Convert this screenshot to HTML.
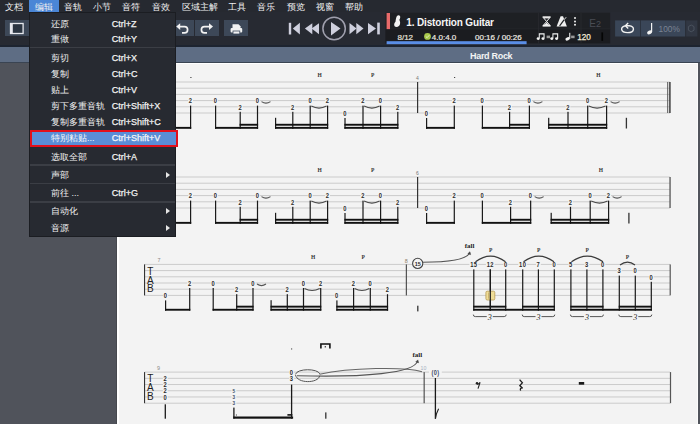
<!DOCTYPE html>
<html><head><meta charset="utf-8">
<style>
*{margin:0;padding:0;box-sizing:border-box}
html,body{width:700px;height:424px;overflow:hidden;background:#272a32;font-family:"Liberation Sans",sans-serif}
.a{position:absolute}
#mb span{position:absolute;top:1px;font-size:9px;line-height:12px;color:#f0f0f0;font-weight:500;white-space:nowrap}
.btn{position:absolute;background:#3d4858}
#menu{position:absolute;left:29px;top:12px;width:147px;height:225px;background:#272a31;border:1px solid #1b1d22}
#menu .r{position:absolute;left:21px;font-size:9px;line-height:12px;color:#f0f0f0;font-weight:500;white-space:nowrap}
#menu .k{position:absolute;left:81.8px;font-size:9px;line-height:12px;color:#f2f2f2;white-space:nowrap;-webkit-text-stroke:0.25px #f2f2f2}
#menu .ar{position:absolute;left:136px;width:0;height:0;border-left:4px solid #e6e6e6;border-top:3.5px solid transparent;border-bottom:3.5px solid transparent}
#menu .sep{position:absolute;left:0;width:145px;height:1.3px;background:#3b3e45}
</style></head><body>
<!-- menu bar -->
<div class="a" style="left:0;top:0;width:700px;height:12px;background:#262930"></div>
<div class="a" style="left:29px;top:0;width:30px;height:13px;background:#4a86d6"></div>
<div id="mb">
<span style="left:5px">文档</span>
<span style="left:35px">编辑</span>
<span style="left:64px">音轨</span>
<span style="left:93px">小节</span>
<span style="left:122px">音符</span>
<span style="left:152px">音效</span>
<span style="left:182px">区域主解</span>
<span style="left:228px">工具</span>
<span style="left:257px">音乐</span>
<span style="left:287px">预览</span>
<span style="left:316px">视窗</span>
<span style="left:345px">帮助</span>
</div>
<!-- toolbar -->
<div class="btn" style="left:4.6px;top:20.3px;width:25px;height:15.8px"></div>
<div class="btn" style="left:170px;top:20px;width:24px;height:16px"></div>
<div class="btn" style="left:195px;top:20px;width:24px;height:16px"></div>
<div class="btn" style="left:224px;top:20px;width:24px;height:16px"></div>
<svg class="a" style="left:0;top:0" width="700" height="63" viewBox="0 0 700 63">
<!-- left button icon -->
<rect x="10.5" y="23.5" width="12.6" height="10" fill="#2b3542" stroke="#e6e8ee" stroke-width="1.3"/>
<rect x="10" y="23" width="2.8" height="11" fill="#e6e8ee"/>
<!-- undo -->
<path d="M179 26.6 H184.5 A3.1 3.1 0 0 1 184.5 32.8 H182" fill="none" stroke="#f2f2f2" stroke-width="1.7"/>
<path d="M176.2 26.6 L180.2 23.3 L180.2 29.9 Z" fill="#f2f2f2"/>
<!-- redo -->
<path d="M210 26.6 H204.5 A3.1 3.1 0 0 0 204.5 32.8 H207" fill="none" stroke="#f2f2f2" stroke-width="1.7"/>
<path d="M213 26.6 L209 23.3 L209 29.9 Z" fill="#f2f2f2"/>
<!-- print -->
<path d="M232.5 24.3 H238.5 L240.5 26.3 V28.5 H232.5 Z" fill="#f2f2f2"/>
<rect x="230.6" y="28" width="11.6" height="4.6" rx="1" fill="#f2f2f2"/>
<rect x="233" y="31" width="6.8" height="3" fill="#f2f2f2" stroke="#3c4a5c" stroke-width="0.8"/>
<!-- transport -->
<g fill="#cfd0de">
<rect x="288.8" y="22.8" width="2.4" height="11.7"/>
<path d="M292.8 28.6 L299.9 22.8 V34.5 Z"/>
<path d="M304.9 28.6 L312.3 23.2 V34.2 Z"/>
<path d="M311.6 28.6 L319 23.2 V34.2 Z"/>
<path d="M331 22 L340.5 28.6 L331 35.4 Z"/>
<path d="M349.5 23 L356.5 28.6 L349.5 34.2 Z"/>
<path d="M356.3 23 L363.5 28.6 L356.3 34.2 Z"/>
<path d="M368 23 L376 28.6 L368 34.2 Z"/>
<rect x="377.2" y="22.6" width="2.6" height="11.8"/>
</g>
<circle cx="334.1" cy="28.5" r="11.2" fill="none" stroke="#a0a0ae" stroke-width="1.5"/>
<!-- track panel -->
<rect x="385.4" y="12.7" width="224.8" height="16.3" fill="#1e2024"/>
<rect x="385.4" y="29" width="224.8" height="14.4" fill="#1b1c20"/><rect x="385.4" y="28.6" width="224.8" height="0.7" fill="#26282d"/>
<rect x="538.3" y="12.7" width="0.8" height="30.7" fill="#2a2c31"/>
<rect x="580.6" y="12.7" width="0.8" height="30.7" fill="#2a2c31"/>
<rect x="386.6" y="13" width="3.4" height="16.1" fill="#e86a6a"/>
<path d="M398.6 15.3 C400.8 15.4 400.6 18 399.3 20 C400.8 22 400.6 26.8 396.5 27 C393.6 27 393.6 23.5 395.5 21.8 C396 19.5 396 15.2 398.6 15.3 Z" fill="#f4f4f4"/>
<text x="406.3" y="26" font-size="10" font-weight="bold" letter-spacing="-0.15" fill="#f6f6f6">1. Distortion Guitar</text>
<text x="397.5" y="39.7" font-size="8" fill="#e8e4dc" stroke="#e8e4dc" stroke-width="0.2">8/12</text>
<circle cx="427.5" cy="36.4" r="3.4" fill="#a8c84a"/>
<path d="M425.8 36.5 L427.1 37.7 L429.3 35.2" fill="none" stroke="#eef4d8" stroke-width="0.8"/>
<text x="431.8" y="39.7" font-size="8" fill="#eeeae2" stroke="#eeeae2" stroke-width="0.2">4.0:4.0</text>
<text x="475" y="39.7" font-size="8" fill="#eeeae2" stroke="#eeeae2" stroke-width="0.2">00:16 / 00:26</text>
<rect x="386.6" y="41.2" width="140" height="3" fill="#5a8ee6"/>
<!-- hourglass -->
<g fill="#f0f0f0">
<rect x="542.6" y="16.3" width="8" height="1.6"/>
<rect x="542.6" y="25" width="8" height="1.6"/>
<path d="M543.6 17.9 H549.6 L546.6 21.5 Z M546.6 21.5 L549.6 25 H543.6 Z" fill="none" stroke="#f0f0f0" stroke-width="1"/>
<path d="M544.5 25 L546.6 22.6 L548.7 25 Z"/>
<path d="M560.6 16.3 H563 L566.9 26.6 H556.6 Z"/>
</g>
<path d="M559.6 25.9 L564.6 19.2" stroke="#1e2024" stroke-width="1.2"/><path d="M564 19.8 L566.2 17.2" stroke="#f0f0f0" stroke-width="0.9"/>
<g fill="#f0f0f0"><circle cx="575" cy="18" r="1"/><circle cx="575" cy="21.4" r="1"/><circle cx="575" cy="24.7" r="1"/></g>
<text x="589.2" y="26.6" font-size="10" fill="#4a4d54">E</text>
<text x="596" y="26.8" font-size="9" fill="#4a4d54">2</text>
<!-- note=note -->
<g fill="#f2f2f2">
<path d="M538.8 33.2 H544.6 V38.6 A1.6 1.3 0 1 1 543.5 37.4 V34.6 H539.8 V38.6 A1.6 1.3 0 1 1 538.8 37.4 Z"/>
<path d="M552.4 33.2 H558.2 V38.6 A1.6 1.3 0 1 1 557.1 37.4 V34.6 H553.4 V38.6 A1.6 1.3 0 1 1 552.4 37.4 Z"/>
<rect x="569.2" y="32.8" width="1.1" height="6" fill="#f2f2f2"/><ellipse cx="567.6" cy="38.9" rx="2.3" ry="1.6" transform="rotate(-25 567.6 38.9)"/>
</g>
<rect x="546.6" y="35.6" width="3.4" height="2.6" fill="#9a9a9a"/>
<rect x="571.1" y="35.6" width="3.5" height="2.6" fill="#9a9a9a"/>
<text x="577.2" y="40" font-size="8.2" fill="#f2ead8" stroke="#f2ead8" stroke-width="0.25">120</text>
<rect x="601.4" y="32.4" width="1.7" height="8.4" fill="#050505"/>
<!-- right buttons -->
<rect x="615.1" y="20.4" width="25" height="16.1" fill="#3a4658"/>
<rect x="640.8" y="20.4" width="44.4" height="16.1" fill="#3a4658"/>
<rect x="640.2" y="20.4" width="0.6" height="16.1" fill="#2c3542"/>
<rect x="686.1" y="20.4" width="11.3" height="16.1" fill="#313743"/>
<path d="M625.3 25.9 C620 26.8 620.2 32.6 627.6 32.6 C635 32.6 635.2 26.2 629.2 25.7 H625.8" fill="none" stroke="#f2f2f2" stroke-width="1.4"/>
<path d="M628.2 23 L625.4 25.7 L628.2 28.4" fill="none" stroke="#f2f2f2" stroke-width="1.4"/>
<rect x="651" y="23" width="1.2" height="9" fill="#f2f2f2"/><ellipse cx="649.6" cy="32.4" rx="2.6" ry="1.9" transform="rotate(-25 649.6 32.4)" fill="#f2f2f2"/>
<text x="658.6" y="32" font-size="8.3" fill="#7a8494">100%</text>
<path d="M691.2 25 L694 26.6 V30.2 L691.2 31.8 L688.4 30.2 V26.6 Z" fill="none" stroke="#4a525e" stroke-width="1"/>
</svg>
<!-- blue bar -->
<div class="a" style="left:0;top:45px;width:700px;height:2px;background:#1d2430"></div>
<div class="a" style="left:0;top:47px;width:700px;height:16px;background:#5e6d84"></div>
<div class="a" style="left:0;top:62px;width:700px;height:1px;background:#3a4452"></div>
<div class="a" style="left:0;top:63px;width:700px;height:361px;background:#50535b"></div>
<div class="a" style="left:116px;top:63px;width:1px;height:361px;background:#46484e"></div>
<div class="a" style="left:117px;top:63px;width:581px;height:361px;background:#f3f3f3;border-left:2px solid #fff;border-top:1px solid #fff;border-right:1px solid #fbfbfb"></div>
<div class="a" style="left:470px;top:49.5px;font-size:9px;letter-spacing:-0.3px;font-weight:bold;color:#f4f4f4;line-height:12px">Hard Rock</div>

<!-- SCORE START -->
<svg class="a" style="left:0;top:0" width="700" height="424" viewBox="0 0 700 424" font-family="Liberation Sans">
<line x1="145.00" y1="82.00" x2="670.00" y2="82.00" stroke="#cbcbcb" stroke-width="1"/>
<line x1="145.00" y1="88.20" x2="670.00" y2="88.20" stroke="#cbcbcb" stroke-width="1"/>
<line x1="145.00" y1="94.40" x2="670.00" y2="94.40" stroke="#cbcbcb" stroke-width="1"/>
<line x1="145.00" y1="100.60" x2="670.00" y2="100.60" stroke="#cbcbcb" stroke-width="1"/>
<line x1="145.00" y1="106.80" x2="670.00" y2="106.80" stroke="#cbcbcb" stroke-width="1"/>
<line x1="145.00" y1="113.00" x2="670.00" y2="113.00" stroke="#cbcbcb" stroke-width="1"/>
<rect x="147.60" y="110.20" width="4.80" height="5.60" fill="#f3f3f3"/>
<text transform="translate(150.00,115.70) scale(0.78,1)" font-size="7.4" fill="#2a2a2a" text-anchor="middle" font-weight="bold" letter-spacing="0.5">0</text>
<rect x="149.40" y="118.00" width="1.20" height="10.80" fill="#1a1a1a"/>
<rect x="188.20" y="97.80" width="4.80" height="5.60" fill="#f3f3f3"/>
<text transform="translate(190.60,103.30) scale(0.78,1)" font-size="7.4" fill="#2a2a2a" text-anchor="middle" font-weight="bold" letter-spacing="0.5">2</text>
<rect x="190.00" y="105.60" width="1.20" height="23.20" fill="#1a1a1a"/>
<rect x="149.40" y="126.90" width="41.80" height="1.90" fill="#111"/>
<rect x="190.30" y="77.00" width="1.20" height="1.00" fill="#444"/>
<rect x="213.20" y="97.80" width="4.80" height="5.60" fill="#f3f3f3"/>
<text transform="translate(215.60,103.30) scale(0.78,1)" font-size="7.4" fill="#2a2a2a" text-anchor="middle" font-weight="bold" letter-spacing="0.5">0</text>
<rect x="215.00" y="105.60" width="1.20" height="23.20" fill="#1a1a1a"/>
<rect x="237.80" y="104.00" width="4.80" height="5.60" fill="#f3f3f3"/>
<text transform="translate(240.20,109.50) scale(0.78,1)" font-size="7.4" fill="#2a2a2a" text-anchor="middle" font-weight="bold" letter-spacing="0.5">2</text>
<rect x="239.60" y="111.80" width="1.20" height="17.00" fill="#1a1a1a"/>
<rect x="255.10" y="97.80" width="4.80" height="5.60" fill="#f3f3f3"/>
<text transform="translate(257.50,103.30) scale(0.78,1)" font-size="7.4" fill="#2a2a2a" text-anchor="middle" font-weight="bold" letter-spacing="0.5">0</text>
<rect x="256.90" y="105.60" width="1.20" height="23.20" fill="#1a1a1a"/>
<rect x="215.00" y="126.90" width="43.10" height="1.90" fill="#111"/>
<rect x="239.60" y="123.80" width="18.50" height="1.90" fill="#111"/>
<path d="M261.5 101.6 Q266 104.6 270.5 101.6" fill="none" stroke="#555" stroke-width="1.1"/>
<rect x="275.00" y="117.80" width="1.20" height="11.00" fill="#1a1a1a"/>
<rect x="290.40" y="104.00" width="4.80" height="5.60" fill="#f3f3f3"/>
<text transform="translate(292.80,109.50) scale(0.78,1)" font-size="7.4" fill="#2a2a2a" text-anchor="middle" font-weight="bold" letter-spacing="0.5">2</text>
<rect x="292.20" y="111.80" width="1.20" height="17.00" fill="#1a1a1a"/>
<rect x="307.80" y="97.80" width="4.80" height="5.60" fill="#f3f3f3"/>
<text transform="translate(310.20,103.30) scale(0.78,1)" font-size="7.4" fill="#2a2a2a" text-anchor="middle" font-weight="bold" letter-spacing="0.5">0</text>
<rect x="309.60" y="105.60" width="1.20" height="23.20" fill="#1a1a1a"/>
<rect x="325.20" y="97.80" width="4.80" height="5.60" fill="#f3f3f3"/>
<text transform="translate(327.60,103.30) scale(0.78,1)" font-size="7.4" fill="#2a2a2a" text-anchor="middle" font-weight="bold" letter-spacing="0.5">2</text>
<rect x="327.00" y="105.60" width="1.20" height="23.20" fill="#1a1a1a"/>
<rect x="275.00" y="126.90" width="53.20" height="1.90" fill="#111"/>
<rect x="275.00" y="123.80" width="53.20" height="1.90" fill="#111"/>
<path d="M311.3 106.1 Q319 110.1 326.6 106.1" fill="none" stroke="#4a4a4a" stroke-width="1.1"/>
<text x="319.60" y="76.50" font-size="5.5" fill="#333" text-anchor="middle" font-weight="bold" font-family="Liberation Serif">H</text>
<rect x="342.60" y="110.20" width="4.80" height="5.60" fill="#f3f3f3"/>
<text transform="translate(345.00,115.70) scale(0.78,1)" font-size="7.4" fill="#2a2a2a" text-anchor="middle" font-weight="bold" letter-spacing="0.5">0</text>
<rect x="344.40" y="118.00" width="1.20" height="10.80" fill="#1a1a1a"/>
<rect x="360.60" y="97.80" width="4.80" height="5.60" fill="#f3f3f3"/>
<text transform="translate(363.00,103.30) scale(0.78,1)" font-size="7.4" fill="#2a2a2a" text-anchor="middle" font-weight="bold" letter-spacing="0.5">2</text>
<rect x="362.40" y="105.60" width="1.20" height="23.20" fill="#1a1a1a"/>
<rect x="378.20" y="97.80" width="4.80" height="5.60" fill="#f3f3f3"/>
<text transform="translate(380.60,103.30) scale(0.78,1)" font-size="7.4" fill="#2a2a2a" text-anchor="middle" font-weight="bold" letter-spacing="0.5">0</text>
<rect x="380.00" y="105.60" width="1.20" height="23.20" fill="#1a1a1a"/>
<rect x="395.40" y="104.00" width="4.80" height="5.60" fill="#f3f3f3"/>
<text transform="translate(397.80,109.50) scale(0.78,1)" font-size="7.4" fill="#2a2a2a" text-anchor="middle" font-weight="bold" letter-spacing="0.5">2</text>
<rect x="397.20" y="111.80" width="1.20" height="17.00" fill="#1a1a1a"/>
<rect x="344.40" y="126.90" width="54.00" height="1.90" fill="#111"/>
<rect x="344.40" y="123.80" width="54.00" height="1.90" fill="#111"/>
<path d="M364.1 106.1 Q372 110.1 379.6 106.1" fill="none" stroke="#4a4a4a" stroke-width="1.1"/>
<text x="372.80" y="76.50" font-size="5.5" fill="#333" text-anchor="middle" font-weight="bold" font-family="Liberation Serif">P</text>
<rect x="417.00" y="82.00" width="1.20" height="31.00" fill="#333"/>
<text x="417.50" y="79.50" font-size="5" fill="#777" text-anchor="middle" font-weight="normal">4</text>
<rect x="424.20" y="110.20" width="4.80" height="5.60" fill="#f3f3f3"/>
<text transform="translate(426.60,115.70) scale(0.78,1)" font-size="7.4" fill="#2a2a2a" text-anchor="middle" font-weight="bold" letter-spacing="0.5">0</text>
<rect x="426.00" y="118.00" width="1.20" height="10.80" fill="#1a1a1a"/>
<rect x="451.90" y="97.80" width="4.80" height="5.60" fill="#f3f3f3"/>
<text transform="translate(454.30,103.30) scale(0.78,1)" font-size="7.4" fill="#2a2a2a" text-anchor="middle" font-weight="bold" letter-spacing="0.5">2</text>
<rect x="453.70" y="105.60" width="1.20" height="23.20" fill="#1a1a1a"/>
<rect x="426.00" y="126.90" width="28.90" height="1.90" fill="#111"/>
<rect x="454.00" y="77.00" width="1.20" height="1.00" fill="#444"/>
<rect x="480.00" y="97.80" width="4.80" height="5.60" fill="#f3f3f3"/>
<text transform="translate(482.40,103.30) scale(0.78,1)" font-size="7.4" fill="#2a2a2a" text-anchor="middle" font-weight="bold" letter-spacing="0.5">0</text>
<rect x="481.80" y="105.60" width="1.20" height="23.20" fill="#1a1a1a"/>
<rect x="507.20" y="104.00" width="4.80" height="5.60" fill="#f3f3f3"/>
<text transform="translate(509.60,109.50) scale(0.78,1)" font-size="7.4" fill="#2a2a2a" text-anchor="middle" font-weight="bold" letter-spacing="0.5">2</text>
<rect x="509.00" y="111.80" width="1.20" height="17.00" fill="#1a1a1a"/>
<rect x="527.00" y="97.80" width="4.80" height="5.60" fill="#f3f3f3"/>
<text transform="translate(529.40,103.30) scale(0.78,1)" font-size="7.4" fill="#2a2a2a" text-anchor="middle" font-weight="bold" letter-spacing="0.5">0</text>
<rect x="528.80" y="105.60" width="1.20" height="23.20" fill="#1a1a1a"/>
<rect x="481.80" y="126.90" width="48.20" height="1.90" fill="#111"/>
<rect x="509.00" y="123.80" width="21.00" height="1.90" fill="#111"/>
<path d="M533.4 101.6 Q537.9 104.6 542.4 101.6" fill="none" stroke="#555" stroke-width="1.1"/>
<rect x="548.10" y="117.80" width="1.20" height="11.00" fill="#1a1a1a"/>
<rect x="565.60" y="104.00" width="4.80" height="5.60" fill="#f3f3f3"/>
<text transform="translate(568.00,109.50) scale(0.78,1)" font-size="7.4" fill="#2a2a2a" text-anchor="middle" font-weight="bold" letter-spacing="0.5">2</text>
<rect x="567.40" y="111.80" width="1.20" height="17.00" fill="#1a1a1a"/>
<rect x="585.30" y="97.80" width="4.80" height="5.60" fill="#f3f3f3"/>
<text transform="translate(587.70,103.30) scale(0.78,1)" font-size="7.4" fill="#2a2a2a" text-anchor="middle" font-weight="bold" letter-spacing="0.5">0</text>
<rect x="587.10" y="105.60" width="1.20" height="23.20" fill="#1a1a1a"/>
<rect x="604.20" y="97.80" width="4.80" height="5.60" fill="#f3f3f3"/>
<text transform="translate(606.60,103.30) scale(0.78,1)" font-size="7.4" fill="#2a2a2a" text-anchor="middle" font-weight="bold" letter-spacing="0.5">2</text>
<rect x="606.00" y="105.60" width="1.20" height="23.20" fill="#1a1a1a"/>
<rect x="548.10" y="126.90" width="59.10" height="1.90" fill="#111"/>
<rect x="548.10" y="123.80" width="59.10" height="1.90" fill="#111"/>
<path d="M588.7 106.1 Q597 110.1 605.6 106.1" fill="none" stroke="#4a4a4a" stroke-width="1.1"/>
<text x="598.50" y="76.50" font-size="5.5" fill="#333" text-anchor="middle" font-weight="bold" font-family="Liberation Serif">H</text>
<path d="M610.6 101.6 Q615.1 104.6 619.6 101.6" fill="none" stroke="#555" stroke-width="1.1"/>
<rect x="625.75" y="117.80" width="1.30" height="10.70" fill="#333"/>
<rect x="667.20" y="82.00" width="1.00" height="31.00" fill="#555"/>
<rect x="669.20" y="82.00" width="1.40" height="31.00" fill="#333"/>
<line x1="145.00" y1="177.00" x2="670.00" y2="177.00" stroke="#cbcbcb" stroke-width="1"/>
<line x1="145.00" y1="183.20" x2="670.00" y2="183.20" stroke="#cbcbcb" stroke-width="1"/>
<line x1="145.00" y1="189.40" x2="670.00" y2="189.40" stroke="#cbcbcb" stroke-width="1"/>
<line x1="145.00" y1="195.60" x2="670.00" y2="195.60" stroke="#cbcbcb" stroke-width="1"/>
<line x1="145.00" y1="201.80" x2="670.00" y2="201.80" stroke="#cbcbcb" stroke-width="1"/>
<line x1="145.00" y1="208.00" x2="670.00" y2="208.00" stroke="#cbcbcb" stroke-width="1"/>
<rect x="147.60" y="205.20" width="4.80" height="5.60" fill="#f3f3f3"/>
<text transform="translate(150.00,210.70) scale(0.78,1)" font-size="7.4" fill="#2a2a2a" text-anchor="middle" font-weight="bold" letter-spacing="0.5">0</text>
<rect x="149.40" y="213.00" width="1.20" height="10.80" fill="#1a1a1a"/>
<rect x="188.20" y="192.80" width="4.80" height="5.60" fill="#f3f3f3"/>
<text transform="translate(190.60,198.30) scale(0.78,1)" font-size="7.4" fill="#2a2a2a" text-anchor="middle" font-weight="bold" letter-spacing="0.5">2</text>
<rect x="190.00" y="200.60" width="1.20" height="23.20" fill="#1a1a1a"/>
<rect x="149.40" y="221.90" width="41.80" height="1.90" fill="#111"/>
<rect x="213.20" y="192.80" width="4.80" height="5.60" fill="#f3f3f3"/>
<text transform="translate(215.60,198.30) scale(0.78,1)" font-size="7.4" fill="#2a2a2a" text-anchor="middle" font-weight="bold" letter-spacing="0.5">0</text>
<rect x="215.00" y="200.60" width="1.20" height="23.20" fill="#1a1a1a"/>
<rect x="237.80" y="199.00" width="4.80" height="5.60" fill="#f3f3f3"/>
<text transform="translate(240.20,204.50) scale(0.78,1)" font-size="7.4" fill="#2a2a2a" text-anchor="middle" font-weight="bold" letter-spacing="0.5">2</text>
<rect x="239.60" y="206.80" width="1.20" height="17.00" fill="#1a1a1a"/>
<rect x="255.10" y="192.80" width="4.80" height="5.60" fill="#f3f3f3"/>
<text transform="translate(257.50,198.30) scale(0.78,1)" font-size="7.4" fill="#2a2a2a" text-anchor="middle" font-weight="bold" letter-spacing="0.5">0</text>
<rect x="256.90" y="200.60" width="1.20" height="23.20" fill="#1a1a1a"/>
<rect x="215.00" y="221.90" width="43.10" height="1.90" fill="#111"/>
<rect x="239.60" y="218.80" width="18.50" height="1.90" fill="#111"/>
<path d="M261.5 196.6 Q266 199.6 270.5 196.6" fill="none" stroke="#555" stroke-width="1.1"/>
<rect x="275.00" y="212.80" width="1.20" height="11.00" fill="#1a1a1a"/>
<rect x="290.40" y="199.00" width="4.80" height="5.60" fill="#f3f3f3"/>
<text transform="translate(292.80,204.50) scale(0.78,1)" font-size="7.4" fill="#2a2a2a" text-anchor="middle" font-weight="bold" letter-spacing="0.5">2</text>
<rect x="292.20" y="206.80" width="1.20" height="17.00" fill="#1a1a1a"/>
<rect x="307.80" y="192.80" width="4.80" height="5.60" fill="#f3f3f3"/>
<text transform="translate(310.20,198.30) scale(0.78,1)" font-size="7.4" fill="#2a2a2a" text-anchor="middle" font-weight="bold" letter-spacing="0.5">0</text>
<rect x="309.60" y="200.60" width="1.20" height="23.20" fill="#1a1a1a"/>
<rect x="325.20" y="192.80" width="4.80" height="5.60" fill="#f3f3f3"/>
<text transform="translate(327.60,198.30) scale(0.78,1)" font-size="7.4" fill="#2a2a2a" text-anchor="middle" font-weight="bold" letter-spacing="0.5">2</text>
<rect x="327.00" y="200.60" width="1.20" height="23.20" fill="#1a1a1a"/>
<rect x="275.00" y="221.90" width="53.20" height="1.90" fill="#111"/>
<rect x="275.00" y="218.80" width="53.20" height="1.90" fill="#111"/>
<path d="M311.3 201.1 Q319 205.1 326.6 201.1" fill="none" stroke="#4a4a4a" stroke-width="1.1"/>
<text x="319.60" y="171.50" font-size="5.5" fill="#333" text-anchor="middle" font-weight="bold" font-family="Liberation Serif">H</text>
<rect x="342.60" y="205.20" width="4.80" height="5.60" fill="#f3f3f3"/>
<text transform="translate(345.00,210.70) scale(0.78,1)" font-size="7.4" fill="#2a2a2a" text-anchor="middle" font-weight="bold" letter-spacing="0.5">0</text>
<rect x="344.40" y="213.00" width="1.20" height="10.80" fill="#1a1a1a"/>
<rect x="360.60" y="192.80" width="4.80" height="5.60" fill="#f3f3f3"/>
<text transform="translate(363.00,198.30) scale(0.78,1)" font-size="7.4" fill="#2a2a2a" text-anchor="middle" font-weight="bold" letter-spacing="0.5">2</text>
<rect x="362.40" y="200.60" width="1.20" height="23.20" fill="#1a1a1a"/>
<rect x="378.20" y="192.80" width="4.80" height="5.60" fill="#f3f3f3"/>
<text transform="translate(380.60,198.30) scale(0.78,1)" font-size="7.4" fill="#2a2a2a" text-anchor="middle" font-weight="bold" letter-spacing="0.5">0</text>
<rect x="380.00" y="200.60" width="1.20" height="23.20" fill="#1a1a1a"/>
<rect x="395.40" y="199.00" width="4.80" height="5.60" fill="#f3f3f3"/>
<text transform="translate(397.80,204.50) scale(0.78,1)" font-size="7.4" fill="#2a2a2a" text-anchor="middle" font-weight="bold" letter-spacing="0.5">2</text>
<rect x="397.20" y="206.80" width="1.20" height="17.00" fill="#1a1a1a"/>
<rect x="344.40" y="221.90" width="54.00" height="1.90" fill="#111"/>
<rect x="344.40" y="218.80" width="54.00" height="1.90" fill="#111"/>
<path d="M364.1 201.1 Q372 205.1 379.6 201.1" fill="none" stroke="#4a4a4a" stroke-width="1.1"/>
<text x="372.80" y="171.50" font-size="5.5" fill="#333" text-anchor="middle" font-weight="bold" font-family="Liberation Serif">P</text>
<rect x="417.00" y="177.00" width="1.20" height="31.00" fill="#333"/>
<text x="417.50" y="174.50" font-size="5" fill="#777" text-anchor="middle" font-weight="normal">6</text>
<rect x="424.20" y="205.20" width="4.80" height="5.60" fill="#f3f3f3"/>
<text transform="translate(426.60,210.70) scale(0.78,1)" font-size="7.4" fill="#2a2a2a" text-anchor="middle" font-weight="bold" letter-spacing="0.5">0</text>
<rect x="426.00" y="213.00" width="1.20" height="10.80" fill="#1a1a1a"/>
<rect x="451.90" y="192.80" width="4.80" height="5.60" fill="#f3f3f3"/>
<text transform="translate(454.30,198.30) scale(0.78,1)" font-size="7.4" fill="#2a2a2a" text-anchor="middle" font-weight="bold" letter-spacing="0.5">2</text>
<rect x="453.70" y="200.60" width="1.20" height="23.20" fill="#1a1a1a"/>
<rect x="426.00" y="221.90" width="28.90" height="1.90" fill="#111"/>
<rect x="480.00" y="192.80" width="4.80" height="5.60" fill="#f3f3f3"/>
<text transform="translate(482.40,198.30) scale(0.78,1)" font-size="7.4" fill="#2a2a2a" text-anchor="middle" font-weight="bold" letter-spacing="0.5">0</text>
<rect x="481.80" y="200.60" width="1.20" height="23.20" fill="#1a1a1a"/>
<rect x="508.20" y="199.00" width="4.80" height="5.60" fill="#f3f3f3"/>
<text transform="translate(510.60,204.50) scale(0.78,1)" font-size="7.4" fill="#2a2a2a" text-anchor="middle" font-weight="bold" letter-spacing="0.5">2</text>
<rect x="510.00" y="206.80" width="1.20" height="17.00" fill="#1a1a1a"/>
<rect x="528.25" y="192.80" width="4.80" height="5.60" fill="#f3f3f3"/>
<text transform="translate(530.65,198.30) scale(0.78,1)" font-size="7.4" fill="#2a2a2a" text-anchor="middle" font-weight="bold" letter-spacing="0.5">0</text>
<rect x="530.05" y="200.60" width="1.20" height="23.20" fill="#1a1a1a"/>
<rect x="481.80" y="221.90" width="49.45" height="1.90" fill="#111"/>
<rect x="510.00" y="218.80" width="21.25" height="1.90" fill="#111"/>
<path d="M534.65 196.6 Q539.15 199.6 543.65 196.6" fill="none" stroke="#555" stroke-width="1.1"/>
<rect x="550.60" y="212.80" width="1.20" height="11.00" fill="#1a1a1a"/>
<rect x="568.10" y="199.00" width="4.80" height="5.60" fill="#f3f3f3"/>
<text transform="translate(570.50,204.50) scale(0.78,1)" font-size="7.4" fill="#2a2a2a" text-anchor="middle" font-weight="bold" letter-spacing="0.5">2</text>
<rect x="569.90" y="206.80" width="1.20" height="17.00" fill="#1a1a1a"/>
<rect x="587.80" y="192.80" width="4.80" height="5.60" fill="#f3f3f3"/>
<text transform="translate(590.20,198.30) scale(0.78,1)" font-size="7.4" fill="#2a2a2a" text-anchor="middle" font-weight="bold" letter-spacing="0.5">0</text>
<rect x="589.60" y="200.60" width="1.20" height="23.20" fill="#1a1a1a"/>
<rect x="606.20" y="192.80" width="4.80" height="5.60" fill="#f3f3f3"/>
<text transform="translate(608.60,198.30) scale(0.78,1)" font-size="7.4" fill="#2a2a2a" text-anchor="middle" font-weight="bold" letter-spacing="0.5">2</text>
<rect x="608.00" y="200.60" width="1.20" height="23.20" fill="#1a1a1a"/>
<rect x="550.60" y="221.90" width="58.60" height="1.90" fill="#111"/>
<rect x="550.60" y="218.80" width="58.60" height="1.90" fill="#111"/>
<path d="M591.2 201.1 Q599.5 205.1 607.6 201.1" fill="none" stroke="#4a4a4a" stroke-width="1.1"/>
<text x="601.00" y="171.50" font-size="5.5" fill="#333" text-anchor="middle" font-weight="bold" font-family="Liberation Serif">H</text>
<path d="M612.6 196.6 Q617.1 199.6 621.6 196.6" fill="none" stroke="#555" stroke-width="1.1"/>
<rect x="628.25" y="212.80" width="1.30" height="10.70" fill="#333"/>
<rect x="669.40" y="177.00" width="1.30" height="31.00" fill="#555"/>
<line x1="144.50" y1="264.40" x2="670.00" y2="264.40" stroke="#cbcbcb" stroke-width="1"/>
<line x1="144.50" y1="270.60" x2="670.00" y2="270.60" stroke="#cbcbcb" stroke-width="1"/>
<line x1="144.50" y1="276.80" x2="670.00" y2="276.80" stroke="#cbcbcb" stroke-width="1"/>
<line x1="144.50" y1="283.00" x2="670.00" y2="283.00" stroke="#cbcbcb" stroke-width="1"/>
<line x1="144.50" y1="289.20" x2="670.00" y2="289.20" stroke="#cbcbcb" stroke-width="1"/>
<line x1="144.50" y1="295.40" x2="670.00" y2="295.40" stroke="#cbcbcb" stroke-width="1"/>
<rect x="144.00" y="264.40" width="1.10" height="31.00" fill="#333"/>
<text x="147.20" y="274.60" font-size="10" fill="#222" text-anchor="start" font-weight="normal">T</text>
<text x="147.00" y="283.70" font-size="10" fill="#222" text-anchor="start" font-weight="normal">A</text>
<text x="147.00" y="292.00" font-size="10" fill="#222" text-anchor="start" font-weight="normal">B</text>
<text x="159.00" y="262.20" font-size="5.4" fill="#888" text-anchor="middle" font-weight="normal">7</text>
<rect x="163.20" y="292.60" width="4.80" height="5.60" fill="#f3f3f3"/>
<text transform="translate(165.60,298.10) scale(0.78,1)" font-size="7.4" fill="#2a2a2a" text-anchor="middle" font-weight="bold" letter-spacing="0.5">0</text>
<rect x="165.00" y="300.40" width="1.20" height="10.30" fill="#1a1a1a"/>
<rect x="187.30" y="280.20" width="4.80" height="5.60" fill="#f3f3f3"/>
<text transform="translate(189.70,285.70) scale(0.78,1)" font-size="7.4" fill="#2a2a2a" text-anchor="middle" font-weight="bold" letter-spacing="0.5">2</text>
<rect x="189.10" y="288.00" width="1.20" height="22.70" fill="#1a1a1a"/>
<rect x="165.00" y="308.80" width="25.30" height="1.90" fill="#111"/>
<rect x="210.80" y="280.20" width="4.80" height="5.60" fill="#f3f3f3"/>
<text transform="translate(213.20,285.70) scale(0.78,1)" font-size="7.4" fill="#2a2a2a" text-anchor="middle" font-weight="bold" letter-spacing="0.5">0</text>
<rect x="212.60" y="288.00" width="1.20" height="22.70" fill="#1a1a1a"/>
<rect x="234.30" y="286.40" width="4.80" height="5.60" fill="#f3f3f3"/>
<text transform="translate(236.70,291.90) scale(0.78,1)" font-size="7.4" fill="#2a2a2a" text-anchor="middle" font-weight="bold" letter-spacing="0.5">2</text>
<rect x="236.10" y="294.20" width="1.20" height="16.50" fill="#1a1a1a"/>
<rect x="250.60" y="280.20" width="4.80" height="5.60" fill="#f3f3f3"/>
<text transform="translate(253.00,285.70) scale(0.78,1)" font-size="7.4" fill="#2a2a2a" text-anchor="middle" font-weight="bold" letter-spacing="0.5">0</text>
<rect x="252.40" y="288.00" width="1.20" height="22.70" fill="#1a1a1a"/>
<rect x="212.60" y="308.80" width="41.00" height="1.90" fill="#111"/>
<rect x="236.10" y="305.70" width="17.50" height="1.90" fill="#111"/>
<path d="M257.0 284.0 Q261.5 287.2 266.0 284.0" fill="none" stroke="#555" stroke-width="1.1"/>
<rect x="270.50" y="300.20" width="1.20" height="10.50" fill="#1a1a1a"/>
<rect x="284.90" y="286.40" width="4.80" height="5.60" fill="#f3f3f3"/>
<text transform="translate(287.30,291.90) scale(0.78,1)" font-size="7.4" fill="#2a2a2a" text-anchor="middle" font-weight="bold" letter-spacing="0.5">2</text>
<rect x="286.70" y="294.20" width="1.20" height="16.50" fill="#1a1a1a"/>
<rect x="301.10" y="280.20" width="4.80" height="5.60" fill="#f3f3f3"/>
<text transform="translate(303.50,285.70) scale(0.78,1)" font-size="7.4" fill="#2a2a2a" text-anchor="middle" font-weight="bold" letter-spacing="0.5">0</text>
<rect x="302.90" y="288.00" width="1.20" height="22.70" fill="#1a1a1a"/>
<rect x="318.30" y="280.20" width="4.80" height="5.60" fill="#f3f3f3"/>
<text transform="translate(320.70,285.70) scale(0.78,1)" font-size="7.4" fill="#2a2a2a" text-anchor="middle" font-weight="bold" letter-spacing="0.5">2</text>
<rect x="320.10" y="288.00" width="1.20" height="22.70" fill="#1a1a1a"/>
<rect x="270.50" y="308.80" width="50.80" height="1.90" fill="#111"/>
<rect x="270.50" y="305.70" width="50.80" height="1.90" fill="#111"/>
<path d="M304.5 288.5 Q312.1 292.5 319.7 288.5" fill="none" stroke="#4a4a4a" stroke-width="1.1"/>
<text x="313.20" y="258.90" font-size="5.5" fill="#333" text-anchor="middle" font-weight="bold" font-family="Liberation Serif">H</text>
<rect x="334.50" y="292.60" width="4.80" height="5.60" fill="#f3f3f3"/>
<text transform="translate(336.90,298.10) scale(0.78,1)" font-size="7.4" fill="#2a2a2a" text-anchor="middle" font-weight="bold" letter-spacing="0.5">0</text>
<rect x="336.30" y="300.40" width="1.20" height="10.30" fill="#1a1a1a"/>
<rect x="351.20" y="280.20" width="4.80" height="5.60" fill="#f3f3f3"/>
<text transform="translate(353.60,285.70) scale(0.78,1)" font-size="7.4" fill="#2a2a2a" text-anchor="middle" font-weight="bold" letter-spacing="0.5">2</text>
<rect x="353.00" y="288.00" width="1.20" height="22.70" fill="#1a1a1a"/>
<rect x="367.90" y="280.20" width="4.80" height="5.60" fill="#f3f3f3"/>
<text transform="translate(370.30,285.70) scale(0.78,1)" font-size="7.4" fill="#2a2a2a" text-anchor="middle" font-weight="bold" letter-spacing="0.5">0</text>
<rect x="369.70" y="288.00" width="1.20" height="22.70" fill="#1a1a1a"/>
<rect x="385.10" y="286.40" width="4.80" height="5.60" fill="#f3f3f3"/>
<text transform="translate(387.50,291.90) scale(0.78,1)" font-size="7.4" fill="#2a2a2a" text-anchor="middle" font-weight="bold" letter-spacing="0.5">2</text>
<rect x="386.90" y="294.20" width="1.20" height="16.50" fill="#1a1a1a"/>
<rect x="336.30" y="308.80" width="51.80" height="1.90" fill="#111"/>
<rect x="336.30" y="305.70" width="51.80" height="1.90" fill="#111"/>
<path d="M354.6 288.5 Q361.95000000000005 292.5 369.3 288.5" fill="none" stroke="#4a4a4a" stroke-width="1.1"/>
<text x="363.30" y="258.90" font-size="5.5" fill="#333" text-anchor="middle" font-weight="bold" font-family="Liberation Serif">P</text>
<rect x="405.80" y="264.40" width="1.10" height="31.00" fill="#444"/>
<text x="406.30" y="262.80" font-size="5.4" fill="#8c7c66" text-anchor="middle" font-weight="normal">8</text>
<circle cx="417.7" cy="263.4" r="5.1" fill="#f3f3f3" stroke="#444" stroke-width="1.1"/>
<text x="417.70" y="265.60" font-size="5.4" fill="#2a2a2a" text-anchor="middle" font-weight="bold">15</text>
<path d="M422.8 262.2 C440 262.2 466 261.4 469.6 252.89999999999998" fill="none" stroke="#555" stroke-width="1.1"/>
<path d="M467.8 253.79999999999998 L469.9 251.79999999999998 L470.6 254.59999999999997 Z" fill="#444" stroke="#444" stroke-width="0.6"/>
<text x="469.60" y="248.40" font-size="7" fill="#222" text-anchor="middle" font-weight="bold" font-family="Liberation Serif">fall</text>
<rect x="417.15" y="305.70" width="1.30" height="5.70" fill="#333"/>
<rect x="469.40" y="261.60" width="8.80" height="5.60" fill="#f3f3f3"/>
<text transform="translate(473.80,267.10) scale(0.78,1)" font-size="7.4" fill="#2a2a2a" text-anchor="middle" font-weight="bold" letter-spacing="0.5">15</text>
<rect x="473.20" y="269.40" width="1.20" height="41.30" fill="#1a1a1a"/>
<rect x="485.90" y="261.60" width="8.80" height="5.60" fill="#f3f3f3"/>
<text transform="translate(490.30,267.10) scale(0.78,1)" font-size="7.4" fill="#2a2a2a" text-anchor="middle" font-weight="bold" letter-spacing="0.5">12</text>
<rect x="489.70" y="269.40" width="1.20" height="41.30" fill="#1a1a1a"/>
<rect x="503.30" y="261.60" width="4.80" height="5.60" fill="#f3f3f3"/>
<text transform="translate(505.70,267.10) scale(0.78,1)" font-size="7.4" fill="#2a2a2a" text-anchor="middle" font-weight="bold" letter-spacing="0.5">0</text>
<rect x="505.10" y="269.40" width="1.20" height="41.30" fill="#1a1a1a"/>
<rect x="473.20" y="305.70" width="33.10" height="1.90" fill="#111"/>
<path d="M473.3 314.59999999999997 Q473.3 316.59999999999997 475.3 316.59999999999997 H486.75 M492.75 316.59999999999997 H504.2 Q506.2 316.59999999999997 506.2 314.59999999999997" fill="none" stroke="#444" stroke-width="0.9"/>
<text x="489.75" y="320.00" font-size="8" fill="#222" text-anchor="middle" font-weight="normal" font-family="Liberation Serif" font-style="italic">3</text>
<rect x="518.30" y="261.60" width="8.80" height="5.60" fill="#f3f3f3"/>
<text transform="translate(522.70,267.10) scale(0.78,1)" font-size="7.4" fill="#2a2a2a" text-anchor="middle" font-weight="bold" letter-spacing="0.5">10</text>
<rect x="522.10" y="269.40" width="1.20" height="41.30" fill="#1a1a1a"/>
<rect x="536.00" y="261.60" width="4.80" height="5.60" fill="#f3f3f3"/>
<text transform="translate(538.40,267.10) scale(0.78,1)" font-size="7.4" fill="#2a2a2a" text-anchor="middle" font-weight="bold" letter-spacing="0.5">7</text>
<rect x="537.80" y="269.40" width="1.20" height="41.30" fill="#1a1a1a"/>
<rect x="551.90" y="261.60" width="4.80" height="5.60" fill="#f3f3f3"/>
<text transform="translate(554.30,267.10) scale(0.78,1)" font-size="7.4" fill="#2a2a2a" text-anchor="middle" font-weight="bold" letter-spacing="0.5">0</text>
<rect x="553.70" y="269.40" width="1.20" height="41.30" fill="#1a1a1a"/>
<rect x="522.10" y="305.70" width="32.80" height="1.90" fill="#111"/>
<path d="M522.2 314.59999999999997 Q522.2 316.59999999999997 524.2 316.59999999999997 H535.5 M541.5 316.59999999999997 H552.8 Q554.8 316.59999999999997 554.8 314.59999999999997" fill="none" stroke="#444" stroke-width="0.9"/>
<text x="538.50" y="320.00" font-size="8" fill="#222" text-anchor="middle" font-weight="normal" font-family="Liberation Serif" font-style="italic">3</text>
<rect x="568.50" y="261.60" width="4.80" height="5.60" fill="#f3f3f3"/>
<text transform="translate(570.90,267.10) scale(0.78,1)" font-size="7.4" fill="#2a2a2a" text-anchor="middle" font-weight="bold" letter-spacing="0.5">5</text>
<rect x="570.30" y="269.40" width="1.20" height="41.30" fill="#1a1a1a"/>
<rect x="584.50" y="261.60" width="4.80" height="5.60" fill="#f3f3f3"/>
<text transform="translate(586.90,267.10) scale(0.78,1)" font-size="7.4" fill="#2a2a2a" text-anchor="middle" font-weight="bold" letter-spacing="0.5">3</text>
<rect x="586.30" y="269.40" width="1.20" height="41.30" fill="#1a1a1a"/>
<rect x="600.50" y="261.60" width="4.80" height="5.60" fill="#f3f3f3"/>
<text transform="translate(602.90,267.10) scale(0.78,1)" font-size="7.4" fill="#2a2a2a" text-anchor="middle" font-weight="bold" letter-spacing="0.5">0</text>
<rect x="602.30" y="269.40" width="1.20" height="41.30" fill="#1a1a1a"/>
<rect x="570.30" y="305.70" width="33.20" height="1.90" fill="#111"/>
<path d="M570.4 314.59999999999997 Q570.4 316.59999999999997 572.4 316.59999999999997 H583.9 M589.9 316.59999999999997 H601.4 Q603.4 316.59999999999997 603.4 314.59999999999997" fill="none" stroke="#444" stroke-width="0.9"/>
<text x="586.90" y="320.00" font-size="8" fill="#222" text-anchor="middle" font-weight="normal" font-family="Liberation Serif" font-style="italic">3</text>
<rect x="616.90" y="267.80" width="4.80" height="5.60" fill="#f3f3f3"/>
<text transform="translate(619.30,273.30) scale(0.78,1)" font-size="7.4" fill="#2a2a2a" text-anchor="middle" font-weight="bold" letter-spacing="0.5">3</text>
<rect x="618.70" y="275.60" width="1.20" height="35.10" fill="#1a1a1a"/>
<rect x="632.90" y="267.80" width="4.80" height="5.60" fill="#f3f3f3"/>
<text transform="translate(635.30,273.30) scale(0.78,1)" font-size="7.4" fill="#2a2a2a" text-anchor="middle" font-weight="bold" letter-spacing="0.5">0</text>
<rect x="634.70" y="275.60" width="1.20" height="35.10" fill="#1a1a1a"/>
<rect x="648.90" y="274.00" width="4.80" height="5.60" fill="#f3f3f3"/>
<text transform="translate(651.30,279.50) scale(0.78,1)" font-size="7.4" fill="#2a2a2a" text-anchor="middle" font-weight="bold" letter-spacing="0.5">0</text>
<rect x="650.70" y="281.80" width="1.20" height="28.90" fill="#1a1a1a"/>
<rect x="618.70" y="305.70" width="33.20" height="1.90" fill="#111"/>
<path d="M618.8 314.59999999999997 Q618.8 316.59999999999997 620.8 316.59999999999997 H632.3 M638.3 316.59999999999997 H649.8 Q651.8 316.59999999999997 651.8 314.59999999999997" fill="none" stroke="#444" stroke-width="0.9"/>
<text x="635.30" y="320.00" font-size="8" fill="#222" text-anchor="middle" font-weight="normal" font-family="Liberation Serif" font-style="italic">3</text>
<rect x="473.20" y="308.80" width="81.70" height="1.90" fill="#111"/>
<rect x="570.30" y="308.80" width="81.60" height="1.90" fill="#111"/>
<path d="M475.5 261.79999999999995 Q490.5 250.39999999999998 505.5 261.79999999999995" fill="none" stroke="#3a3a3a" stroke-width="1.2"/>
<text x="490.70" y="252.40" font-size="5.5" fill="#333" text-anchor="middle" font-weight="bold" font-family="Liberation Serif">P</text>
<path d="M523.5 261.79999999999995 Q538.75 250.39999999999998 554 261.79999999999995" fill="none" stroke="#3a3a3a" stroke-width="1.2"/>
<text x="538.80" y="252.40" font-size="5.5" fill="#333" text-anchor="middle" font-weight="bold" font-family="Liberation Serif">P</text>
<path d="M571.5 261.79999999999995 Q587.25 250.39999999999998 603 261.79999999999995" fill="none" stroke="#3a3a3a" stroke-width="1.2"/>
<text x="587.30" y="252.40" font-size="5.5" fill="#333" text-anchor="middle" font-weight="bold" font-family="Liberation Serif">P</text>
<path d="M620 265.0 Q627.5 259.4 635 265.0" fill="none" stroke="#3a3a3a" stroke-width="1.2"/>
<text x="627.50" y="258.60" font-size="5.5" fill="#333" text-anchor="middle" font-weight="bold" font-family="Liberation Serif">P</text>
<rect x="485.9" y="291.2" width="8.9" height="8.8" rx="1.3" fill="#efdd98" stroke="#b89a50" stroke-width="0.8"/>
<rect x="489.70" y="269.40" width="1.20" height="41.30" fill="#1a1a1a"/>
<rect x="488.00" y="292.50" width="0.60" height="6.20" fill="#b89a50"/>
<rect x="669.60" y="264.40" width="1.20" height="31.00" fill="#555"/>
<line x1="144.50" y1="372.10" x2="670.00" y2="372.10" stroke="#cbcbcb" stroke-width="1"/>
<line x1="144.50" y1="378.32" x2="670.00" y2="378.32" stroke="#cbcbcb" stroke-width="1"/>
<line x1="144.50" y1="384.54" x2="670.00" y2="384.54" stroke="#cbcbcb" stroke-width="1"/>
<line x1="144.50" y1="390.76" x2="670.00" y2="390.76" stroke="#cbcbcb" stroke-width="1"/>
<line x1="144.50" y1="396.98" x2="670.00" y2="396.98" stroke="#cbcbcb" stroke-width="1"/>
<line x1="144.50" y1="403.20" x2="670.00" y2="403.20" stroke="#cbcbcb" stroke-width="1"/>
<rect x="144.00" y="372.10" width="1.10" height="31.10" fill="#333"/>
<text x="147.20" y="382.30" font-size="10" fill="#222" text-anchor="start" font-weight="normal">T</text>
<text x="147.00" y="391.40" font-size="10" fill="#222" text-anchor="start" font-weight="normal">A</text>
<text x="147.00" y="399.70" font-size="10" fill="#222" text-anchor="start" font-weight="normal">B</text>
<text x="158.60" y="369.70" font-size="5.4" fill="#888" text-anchor="middle" font-weight="normal">9</text>
<rect x="162.90" y="375.50" width="4.80" height="5.60" fill="#f3f3f3"/>
<text transform="translate(165.30,381.00) scale(0.78,1)" font-size="7.4" fill="#2a2a2a" text-anchor="middle" font-weight="bold" letter-spacing="0.5">2</text>
<rect x="162.90" y="381.70" width="4.80" height="5.60" fill="#f3f3f3"/>
<text transform="translate(165.30,387.20) scale(0.78,1)" font-size="7.4" fill="#2a2a2a" text-anchor="middle" font-weight="bold" letter-spacing="0.5">2</text>
<rect x="162.90" y="387.90" width="4.80" height="5.60" fill="#f3f3f3"/>
<text transform="translate(165.30,393.40) scale(0.78,1)" font-size="7.4" fill="#2a2a2a" text-anchor="middle" font-weight="bold" letter-spacing="0.5">2</text>
<rect x="162.90" y="394.10" width="4.80" height="5.60" fill="#f3f3f3"/>
<text transform="translate(165.30,399.60) scale(0.78,1)" font-size="7.4" fill="#2a2a2a" text-anchor="middle" font-weight="bold" letter-spacing="0.5">0</text>
<rect x="164.65" y="404.30" width="1.30" height="14.40" fill="#1a1a1a"/>
<rect x="231.50" y="387.50" width="4.80" height="5.60" fill="#f3f3f3"/>
<text transform="translate(233.90,393.00) scale(0.78,1)" font-size="6.0" fill="#3a4e66" text-anchor="middle" font-weight="bold" letter-spacing="0.5">5</text>
<rect x="231.50" y="393.70" width="4.80" height="5.60" fill="#f3f3f3"/>
<text transform="translate(233.90,399.20) scale(0.78,1)" font-size="6.0" fill="#3a4e66" text-anchor="middle" font-weight="bold" letter-spacing="0.5">3</text>
<rect x="231.50" y="399.90" width="4.80" height="5.60" fill="#f3f3f3"/>
<text transform="translate(233.90,405.40) scale(0.78,1)" font-size="6.0" fill="#3a4e66" text-anchor="middle" font-weight="bold" letter-spacing="0.5">3</text>
<rect x="233.25" y="407.60" width="1.30" height="11.10" fill="#1a1a1a"/>
<rect x="233.30" y="416.50" width="59.80" height="2.20" fill="#111"/>
<rect x="287.40" y="414.10" width="5.00" height="1.60" fill="#111"/>
<rect x="235.90" y="414.50" width="1.10" height="1.00" fill="#444"/>
<rect x="291.00" y="348.40" width="1.20" height="1.10" fill="#555"/>
<rect x="289.20" y="369.30" width="4.80" height="5.60" fill="#f3f3f3"/>
<text transform="translate(291.60,374.80) scale(0.78,1)" font-size="7.4" fill="#2a2a2a" text-anchor="middle" font-weight="bold" letter-spacing="0.5">0</text>
<rect x="289.20" y="375.50" width="4.80" height="5.60" fill="#f3f3f3"/>
<text transform="translate(291.60,381.00) scale(0.78,1)" font-size="7.4" fill="#2a2a2a" text-anchor="middle" font-weight="bold" letter-spacing="0.5">3</text>
<rect x="290.95" y="384.60" width="1.30" height="34.10" fill="#1a1a1a"/>
<path d="M295.5 374.3 C297 368.3 318 368.3 319.8 373.90000000000003" fill="none" stroke="#555" stroke-width="1.0"/>
<path d="M295.5 374.90000000000003 C297 383.70000000000005 318 383.70000000000005 319.8 375.70000000000005" fill="none" stroke="#555" stroke-width="1.0"/>
<path d="M319.5 374.3 C350 367.5 405 366.70000000000005 422 371.70000000000005" fill="none" stroke="#666" stroke-width="1.1"/>
<path d="M297 375.70000000000005 C365 377.6 414 373.1 417.6 361.1" fill="none" stroke="#555" stroke-width="1.1"/>
<path d="M415.8 361.90000000000003 L417.8 359.90000000000003 L418.6 362.70000000000005 Z" fill="#444" stroke="#444" stroke-width="0.6"/>
<text x="417.40" y="356.50" font-size="7" fill="#222" text-anchor="middle" font-weight="bold" font-family="Liberation Serif">fall</text>
<path d="M320.9 348.6 V344 H329.9 V348.6" fill="none" stroke="#111" stroke-width="1.6"/>
<rect x="324.70" y="346.20" width="1.20" height="1.20" fill="#111"/>
<rect x="325.15" y="412.40" width="1.30" height="6.30" fill="#333"/>
<rect x="423.60" y="372.10" width="1.10" height="31.10" fill="#444"/>
<text x="423.50" y="369.90" font-size="5.2" fill="#a6b0c0" text-anchor="middle" font-weight="normal">10</text>
<rect x="429.00" y="369.60" width="12.80" height="5.60" fill="#f3f3f3"/>
<text transform="translate(435.40,375.10) scale(0.78,1)" font-size="7.2" fill="#3a4a66" text-anchor="middle" font-weight="bold" letter-spacing="0.5">(0)</text>
<rect x="434.75" y="378.00" width="1.30" height="40.70" fill="#1a1a1a"/>
<path d="M435.4 418.70000000000005 Q436 413.70000000000005 438.6 408.70000000000005" fill="none" stroke="#222" stroke-width="1.1"/>
<path d="M477 384.2 Q478.9 384.4 480.1 382.3 L478.0 388.7" fill="none" stroke="#222" stroke-width="1.1"/>
<circle cx="477.0" cy="383.2" r="1.25" fill="#222"/>
<path d="M519.6 379.6 L522.4 382.8 L519.8 385.6 L522.6 388.2 Q519.5 387.4 520.6 390.6" fill="none" stroke="#222" stroke-width="1.3"/>
<rect x="578.80" y="382.00" width="5.40" height="2.70" fill="#1a1a1a"/>
<rect x="669.90" y="372.10" width="1.20" height="31.10" fill="#555"/>
</svg>
<!-- SCORE END -->
<!-- dropdown -->
<div id="menu">
<div class="sep" style="top:34.1px"></div>
<div class="sep" style="top:151.3px"></div>
<div class="sep" style="top:170.1px"></div>
<div class="sep" style="top:188.3px"></div>
<div class="r" style="top:4.7px">还原</div>
<div class="k" style="top:4.7px">Ctrl+Z</div>
<div class="r" style="top:19.8px">重做</div>
<div class="k" style="top:19.8px">Ctrl+Y</div>
<div class="r" style="top:38.6px">剪切</div>
<div class="k" style="top:38.6px">Ctrl+X</div>
<div class="r" style="top:55.0px">复制</div>
<div class="k" style="top:55.0px">Ctrl+C</div>
<div class="r" style="top:71.0px">贴上</div>
<div class="k" style="top:71.0px">Ctrl+V</div>
<div class="r" style="top:87.0px">剪下多重音轨</div>
<div class="k" style="top:87.0px">Ctrl+Shift+X</div>
<div class="r" style="top:102.8px">复制多重音轨</div>
<div class="k" style="top:102.8px">Ctrl+Shift+C</div>
<div class="r" style="top:138.0px">选取全部</div>
<div class="k" style="top:138.0px">Ctrl+A</div>
<div class="r" style="top:156.0px">声部</div>
<div class="ar" style="top:159.0px"></div>
<div class="r" style="top:174.1px">前往 ...</div>
<div class="k" style="top:174.1px">Ctrl+G</div>
<div class="r" style="top:191.8px">自动化</div>
<div class="ar" style="top:194.8px"></div>
<div class="r" style="top:208.7px">音源</div>
<div class="ar" style="top:211.7px"></div>
</div>
<div class="a" style="left:30px;top:129.5px;width:148px;height:17.5px;border:2px solid #e2101c;background:#5a8dd6"></div>
<div class="a" style="left:51px;top:132px;font-size:9px;line-height:12px;color:#f8f8f8;font-weight:500;white-space:nowrap">特别粘贴...</div>
<div class="a" style="left:111.8px;top:132px;font-size:9px;line-height:12px;color:#f6f6f6;white-space:nowrap;-webkit-text-stroke:0.25px #f6f6f6">Ctrl+Shift+V</div>

</body></html>
